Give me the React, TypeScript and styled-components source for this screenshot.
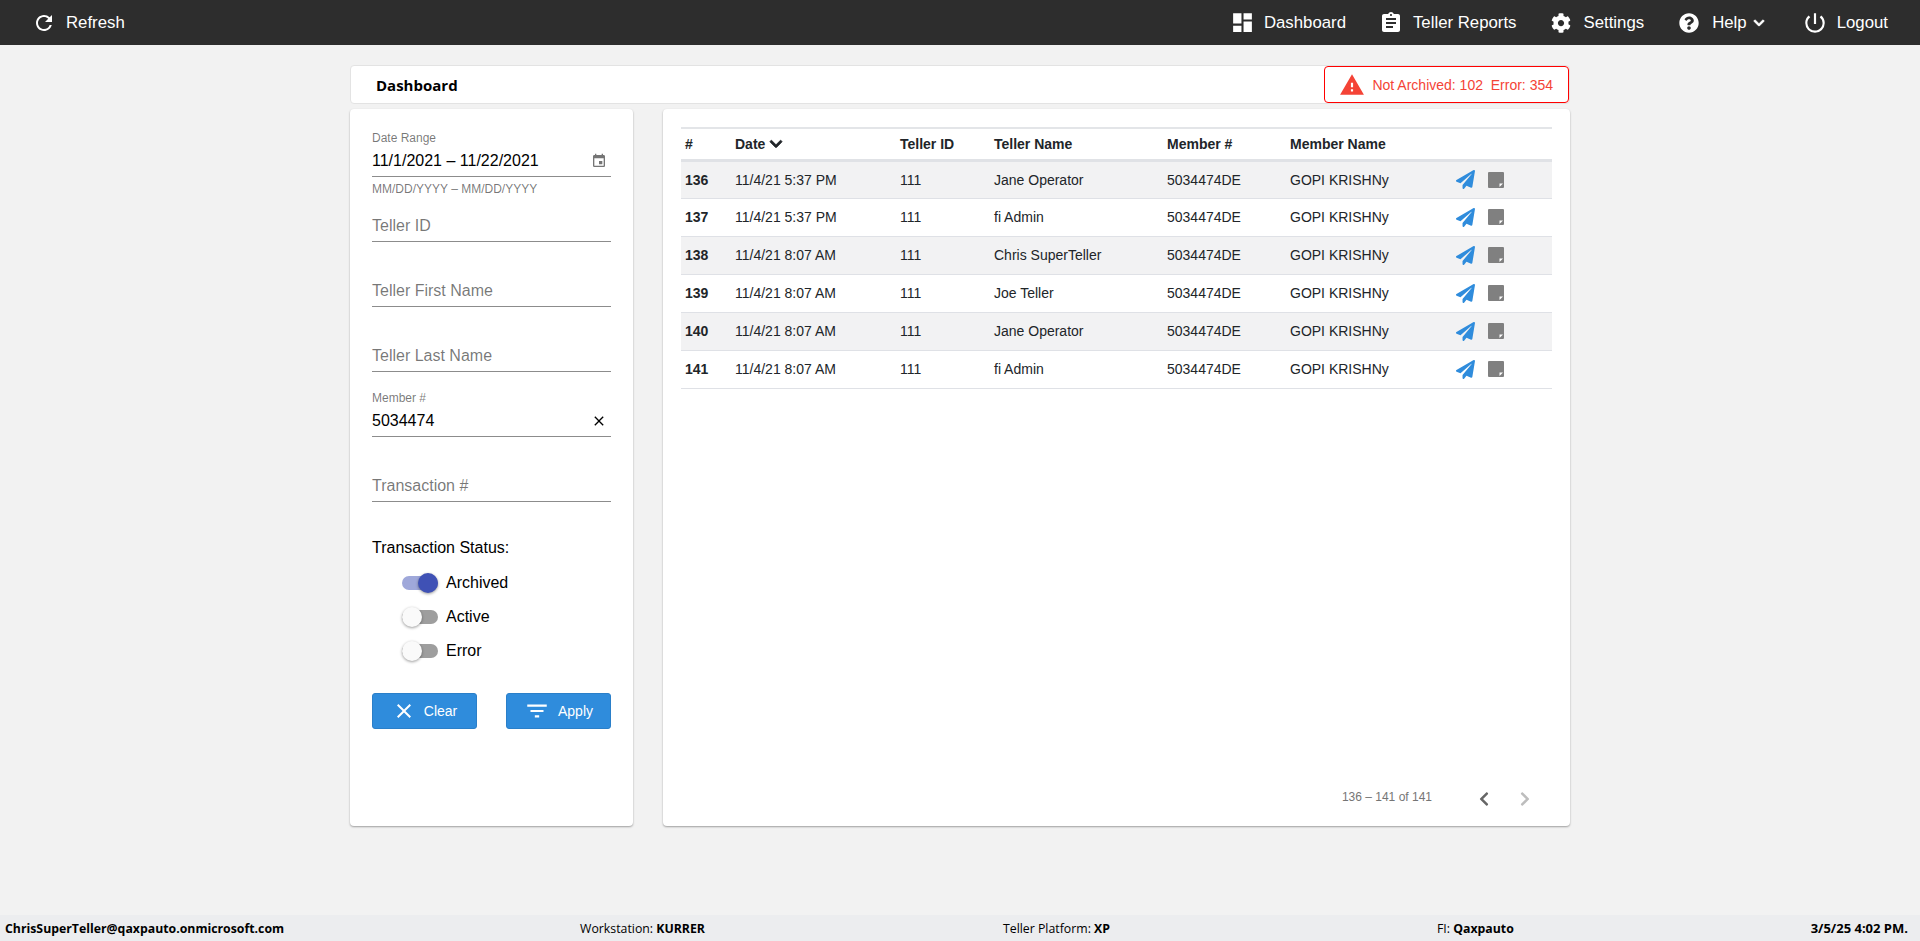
import { createGlobalStyle } from "styled-components";
import styled from "styled-components";
import { FaChevronDown, FaChevronLeft, FaChevronRight, FaCog, FaPaperPlane, FaQuestionCircle } from "react-icons/fa";
import {
  MdAssignment,
  MdClose,
  MdDashboard,
  MdEvent,
  MdFilterList,
  MdPowerSettingsNew,
  MdRefresh,
  MdWarning,
} from "react-icons/md";

const BLUE = "#2f8cdc";

const rows = [
  { id: 136, date: "11/4/21 5:37 PM", teller: "Jane Operator" },
  { id: 137, date: "11/4/21 5:37 PM", teller: "fi Admin" },
  { id: 138, date: "11/4/21 8:07 AM", teller: "Chris SuperTeller" },
  { id: 139, date: "11/4/21 8:07 AM", teller: "Joe Teller" },
  { id: 140, date: "11/4/21 8:07 AM", teller: "Jane Operator" },
  { id: 141, date: "11/4/21 8:07 AM", teller: "fi Admin" },
];

const StickyNote: React.FC = () => (
  <svg width="16" height="16" viewBox="0 0 16 16">
    <rect width="16" height="16" rx="1" fill="#808080" />
    <path d="M11.5 11.5H15L11.5 15z" fill="#fff" />
  </svg>
);

const App: React.FC = () => (
  <Page>
    <GlobalStyle />
    <TopBar>
      <NavButton $gap={10}>
        <MdRefresh size={24} />
        Refresh
      </NavButton>
      <Nav>
        <NavButton $gap={9}>
          <MdDashboard size={25} />
          Dashboard
        </NavButton>
        <NavButton $gap={10} $left={1}>
          <MdAssignment size={24} />
          Teller Reports
        </NavButton>
        <NavButton $gap={13} $left={2}>
          <FaCog size={20} />
          Settings
        </NavButton>
        <NavButton $gap={13} $left={3}>
          <FaQuestionCircle size={20} />
          Help
          <NavChevron size={12} />
        </NavButton>
        <NavButton $gap={9} $left={5}>
          <MdPowerSettingsNew size={26} />
          Logout
        </NavButton>
      </Nav>
    </TopBar>

    <Content>
      <TitleBar>
        <Title>Dashboard</Title>
        <Alert>
          <MdWarning size={26} />
          <AlertText>Not Archived: 102&nbsp;&nbsp;Error: 354</AlertText>
        </Alert>
      </TitleBar>

      <Columns>
        <Sidebar>
          <Field>
            <FloatLabel>Date Range</FloatLabel>
            <FieldValue>
              <span>11/1/2021 – 11/22/2021</span>
              <MdEvent size={16} color="#757575" />
            </FieldValue>
            <Helper>MM/DD/YYYY – MM/DD/YYYY</Helper>
          </Field>
          <EmptyField $top={15}>Teller ID</EmptyField>
          <EmptyField>Teller First Name</EmptyField>
          <EmptyField>Teller Last Name</EmptyField>
          <Field $top={19}>
            <FloatLabel>Member #</FloatLabel>
            <FieldValue>
              <span>5034474</span>
              <MdClose size={16} color="#000" />
            </FieldValue>
          </Field>
          <EmptyField>Transaction #</EmptyField>

          <StatusTitle>Transaction Status:</StatusTitle>
          <StatusList>
            <StatusRow>
              <Track $on />
              Archived
            </StatusRow>
            <StatusRow>
              <Track />
              Active
            </StatusRow>
            <StatusRow>
              <Track />
              Error
            </StatusRow>
          </StatusList>

          <Actions>
            <ActionButton>
              <MdClose size={24} />
              Clear
            </ActionButton>
            <ActionButton>
              <MdFilterList size={26} />
              Apply
            </ActionButton>
          </Actions>
        </Sidebar>

        <Main>
          <Table>
            <thead>
              <tr>
                <HeadCell $width={50}>#</HeadCell>
                <HeadCell $width={165}>
                  Date <SortChevron size={14} />
                </HeadCell>
                <HeadCell $width={94}>Teller ID</HeadCell>
                <HeadCell $width={173}>Teller Name</HeadCell>
                <HeadCell $width={123}>Member #</HeadCell>
                <HeadCell $width={165}>Member Name</HeadCell>
                <HeadCell />
              </tr>
            </thead>
            <tbody>
              {rows.map((row) => (
                <BodyRow key={row.id}>
                  <IdCell>{row.id}</IdCell>
                  <BodyCell>{row.date}</BodyCell>
                  <BodyCell>111</BodyCell>
                  <BodyCell>{row.teller}</BodyCell>
                  <BodyCell>5034474DE</BodyCell>
                  <BodyCell>GOPI KRISHNy</BodyCell>
                  <BodyCell>
                    <RowIcons>
                      <FaPaperPlane size={19} color={BLUE} />
                      <StickyNote />
                    </RowIcons>
                  </BodyCell>
                </BodyRow>
              ))}
            </tbody>
          </Table>
          <Pager>
            <PagerText>136 – 141 of 141</PagerText>
            <FaChevronLeft size={16} color="#666" />
            <FaChevronRight size={16} color="#bdbdbd" />
          </Pager>
        </Main>
      </Columns>
    </Content>

    <StatusBar>
      <StatusStrong>ChrisSuperTeller@qaxpauto.onmicrosoft.com</StatusStrong>
      <StatusItem $left={296}>
        Workstation: <StatusStrong>KURRER</StatusStrong>
      </StatusItem>
      <StatusItem $left={298}>
        Teller Platform: <StatusStrong>XP</StatusStrong>
      </StatusItem>
      <StatusItem $left={327}>
        FI: <StatusStrong>Qaxpauto</StatusStrong>
      </StatusItem>
      <StatusTime>3/5/25 4:02 PM.</StatusTime>
    </StatusBar>
  </Page>
);
export default App;

const GlobalStyle = createGlobalStyle`
  html, body {
    margin: 0;
    height: 100%;
    background: #f2f2f2;
  }
  body {
    font-family: "Liberation Sans", Arial, sans-serif;
  }
`;

const Page = styled.div`
  display: flex;
  flex-direction: column;
  height: 941px;
  overflow: hidden;
`;

const TopBar = styled.header`
  display: flex;
  flex: none;
  align-items: center;
  justify-content: space-between;
  height: 45px;
  padding: 0 32px;
  background: #2d2d2d;
`;

const Nav = styled.nav`
  display: flex;
  align-items: center;
  gap: 32px;
`;

const NavButton = styled.div<{ $gap: number; $left?: number }>`
  display: flex;
  align-items: center;
  gap: ${(p) => p.$gap}px;
  margin-left: ${(p) => p.$left ?? 0}px;
  color: #fff;
  font-size: 16.8px;
`;

const NavChevron = styled(FaChevronDown)`
  margin-left: -7px;
  stroke: currentColor;
  stroke-width: 30;
`;

const Content = styled.main`
  flex: 1;
  width: 1220px;
  margin: 0 auto;
  padding-top: 20px;
`;

const TitleBar = styled.div`
  display: flex;
  align-items: center;
  justify-content: space-between;
  box-sizing: border-box;
  height: 39px;
  padding-left: 25px;
  background: #fff;
  border: 1px solid #e3e3e3;
  border-radius: 4px;
`;

const Title = styled.h1`
  margin: 0;
  font-family: "Open Sans", sans-serif;
  font-size: 15px;
  font-weight: 700;
  color: #000;
`;

const Alert = styled.div`
  display: flex;
  align-items: center;
  gap: 7px;
  box-sizing: border-box;
  height: 37px;
  padding: 0 15px 0 14px;
  color: #f44336;
  background: #fff;
  border: 1px solid #f00;
  border-radius: 4px;
`;

const AlertText = styled.span`
  font-size: 14px;
`;

const Columns = styled.div`
  display: flex;
  gap: 30px;
  margin-top: 5px;
  height: 717px;
`;

const Sidebar = styled.aside`
  box-sizing: border-box;
  width: 283px;
  padding: 22px 22px 0;
  background: #fff;
  border-radius: 4px;
  box-shadow: 0 1px 2px rgba(0, 0, 0, 0.35);
`;

const Field = styled.div<{ $top?: number }>`
  margin-top: ${(p) => p.$top ?? 0}px;
`;

const FloatLabel = styled.div`
  font-size: 12px;
  line-height: 14px;
  color: rgba(0, 0, 0, 0.54);
`;

const FieldValue = styled.div`
  display: flex;
  align-items: center;
  justify-content: space-between;
  box-sizing: border-box;
  height: 32px;
  padding-right: 4px;
  font-size: 16px;
  color: #000;
  border-bottom: 1px solid #8c8c8c;
`;

const Helper = styled.div`
  margin-top: 5px;
  font-size: 12px;
  line-height: 14px;
  color: rgba(0, 0, 0, 0.54);
`;

const EmptyField = styled.div<{ $top?: number }>`
  display: flex;
  align-items: center;
  box-sizing: border-box;
  height: 31px;
  margin-top: ${(p) => p.$top ?? 34}px;
  font-size: 16px;
  color: rgba(0, 0, 0, 0.54);
  border-bottom: 1px solid #8c8c8c;
`;

const StatusTitle = styled.div`
  margin-top: 36px;
  font-size: 16px;
  line-height: 20px;
  color: #000;
`;

const StatusList = styled.div`
  display: flex;
  flex-direction: column;
  gap: 14px;
  margin-top: 15px;
  padding-left: 30px;
`;

const StatusRow = styled.div`
  display: flex;
  align-items: center;
  gap: 8px;
  height: 20px;
  font-size: 16px;
  color: #000;
`;

const Track = styled.span<{ $on?: boolean }>`
  position: relative;
  display: block;
  width: 36px;
  height: 14px;
  border-radius: 7px;
  background: ${(p) => (p.$on ? "#9fa8da" : "#9e9e9e")};

  &::after {
    content: "";
    position: absolute;
    top: -3px;
    left: ${(p) => (p.$on ? "16px" : "0")};
    width: 20px;
    height: 20px;
    border-radius: 50%;
    background: ${(p) => (p.$on ? "#3f51b5" : "#fafafa")};
    box-shadow: 0 1px 3px rgba(0, 0, 0, 0.4);
  }
`;

const Actions = styled.div`
  display: flex;
  justify-content: space-between;
  margin-top: 32px;
`;

const ActionButton = styled.button`
  display: flex;
  align-items: center;
  justify-content: center;
  gap: 8px;
  box-sizing: border-box;
  width: 105px;
  height: 36px;
  padding: 0;
  font-family: inherit;
  font-size: 14px;
  color: #fff;
  background: ${BLUE};
  border: 1px solid #2a7fc9;
  border-radius: 3px;
`;

const Main = styled.section`
  display: flex;
  flex-direction: column;
  justify-content: space-between;
  box-sizing: border-box;
  width: 907px;
  padding: 18px 18px 0;
  background: #fff;
  border-radius: 4px;
  box-shadow: 0 1px 2px rgba(0, 0, 0, 0.35);
`;

const Table = styled.table`
  width: 100%;
  table-layout: fixed;
  border-collapse: collapse;
  font-size: 14px;
  color: #212529;
`;

const HeadCell = styled.th<{ $width?: number }>`
  box-sizing: border-box;
  width: ${(p) => (p.$width ? `${p.$width}px` : "auto")};
  height: 32px;
  padding: 0 4px;
  font-weight: 700;
  text-align: left;
  border-top: 2px solid #e3e5e8;
  border-bottom: 3px solid #e0e2e6;
`;

const SortChevron = styled(FaChevronDown)`
  vertical-align: -2px;
  stroke: currentColor;
  stroke-width: 30;
`;

const BodyRow = styled.tr`
  height: 38px;
  border-bottom: 1px solid #dfe1e6;

  &:nth-child(odd) {
    background: #f2f2f3;
  }
`;

const BodyCell = styled.td`
  padding: 0 4px;
`;

const IdCell = styled(BodyCell)`
  font-weight: 700;
`;

const RowIcons = styled.div`
  display: flex;
  align-items: center;
  gap: 13px;
  padding-left: 1px;
`;

const Pager = styled.div`
  display: flex;
  align-items: center;
  justify-content: flex-end;
  gap: 25px;
  height: 54px;
  padding-right: 19px;
`;

const PagerText = styled.span`
  margin: 0 19px 4px 0;
  font-size: 12px;
  color: #757575;
`;

const StatusBar = styled.footer`
  display: flex;
  flex: none;
  align-items: center;
  height: 26px;
  padding: 0 12px 0 5px;
  font-family: "Open Sans", sans-serif;
  font-size: 12.3px;
  color: #000;
  background: #ecedef;
`;

const StatusStrong = styled.strong`
  font-weight: 700;
`;

const StatusItem = styled.span<{ $left: number }>`
  margin-left: ${(p) => p.$left}px;
`;

const StatusTime = styled.strong`
  margin-left: auto;
  font-size: 13px;
  font-weight: 700;
`;
